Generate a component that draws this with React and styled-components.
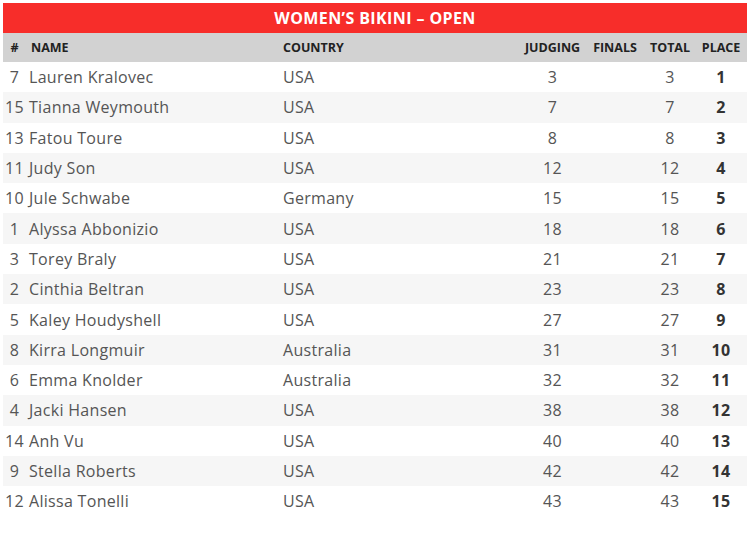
import React from "react";
import styled, { createGlobalStyle } from "styled-components";

const GlobalStyle = createGlobalStyle`
  body {
    margin: 0;
    background: #fff;
    font-family: "Open Sans", "Liberation Sans", sans-serif;
  }
`;

const Wrapper = styled.div`
  padding: 3px;
`;

const Table = styled.table`
  width: 744px;
  border-collapse: collapse;
  table-layout: fixed;
  color: #555;
`;

const TitleCell = styled.th`
  background: #f72d2a;
  color: #fff;
  font-size: 16px;
  font-weight: 700;
  letter-spacing: 0.4px;
  height: 30px;
  padding: 0;
  text-align: center;
`;

const HeadCell = styled.th`
  background: #d2d2d2;
  color: #222;
  font-size: 12.5px;
  font-weight: 700;
  height: 29px;
  padding: 0 0 0 ${({ $pad }) => $pad || 0}px;
  text-align: ${({ $align }) => $align || "center"};
`;

const Row = styled.tr`
  background: ${({ $striped }) => ($striped ? "#f6f6f6" : "#fff")};
`;

const Cell = styled.td`
  font-size: 16px;
  letter-spacing: 0.3px;
  height: 30.3px;
  padding: 0 0 0 ${({ $pad }) => $pad || 0}px;
  text-align: ${({ $align }) => $align || "center"};
  font-weight: ${({ $bold }) => ($bold ? 700 : 400)};
  color: ${({ $bold }) => ($bold ? "#333" : "#555")};
  white-space: nowrap;
`;

const results = [
  [7, "Lauren Kralovec", "USA", 3, 3, 1],
  [15, "Tianna Weymouth", "USA", 7, 7, 2],
  [13, "Fatou Toure", "USA", 8, 8, 3],
  [11, "Judy Son", "USA", 12, 12, 4],
  [10, "Jule Schwabe", "Germany", 15, 15, 5],
  [1, "Alyssa Abbonizio", "USA", 18, 18, 6],
  [3, "Torey Braly", "USA", 21, 21, 7],
  [2, "Cinthia Beltran", "USA", 23, 23, 8],
  [5, "Kaley Houdyshell", "USA", 27, 27, 9],
  [8, "Kirra Longmuir", "Australia", 31, 31, 10],
  [6, "Emma Knolder", "Australia", 32, 32, 11],
  [4, "Jacki Hansen", "USA", 38, 38, 12],
  [14, "Anh Vu", "USA", 40, 40, 13],
  [9, "Stella Roberts", "USA", 42, 42, 14],
  [12, "Alissa Tonelli", "USA", 43, 43, 15],
];

const App = () => {
  return (
    <Wrapper>
      <GlobalStyle />
      <Table>
        <colgroup>
          <col style={{ width: 23 }} />
          <col style={{ width: 254 }} />
          <col style={{ width: 240 }} />
          <col style={{ width: 65 }} />
          <col style={{ width: 60 }} />
          <col style={{ width: 50 }} />
          <col style={{ width: 52 }} />
        </colgroup>
        <thead>
          <tr>
            <TitleCell colSpan={7}>WOMEN’S BIKINI – OPEN</TitleCell>
          </tr>
          <tr>
            <HeadCell>#</HeadCell>
            <HeadCell $align="left" $pad={5}>NAME</HeadCell>
            <HeadCell $align="left" $pad={3}>COUNTRY</HeadCell>
            <HeadCell>JUDGING</HeadCell>
            <HeadCell>FINALS</HeadCell>
            <HeadCell>TOTAL</HeadCell>
            <HeadCell>PLACE</HeadCell>
          </tr>
        </thead>
        <tbody>
          {results.map(([num, name, country, judging, total, place], i) => (
            <Row key={num} $striped={i % 2 === 1}>
              <Cell>{num}</Cell>
              <Cell $align="left" $pad={3}>{name}</Cell>
              <Cell $align="left" $pad={3}>{country}</Cell>
              <Cell>{judging}</Cell>
              <Cell></Cell>
              <Cell>{total}</Cell>
              <Cell $bold>{place}</Cell>
            </Row>
          ))}
        </tbody>
      </Table>
    </Wrapper>
  );
};

export default App;
